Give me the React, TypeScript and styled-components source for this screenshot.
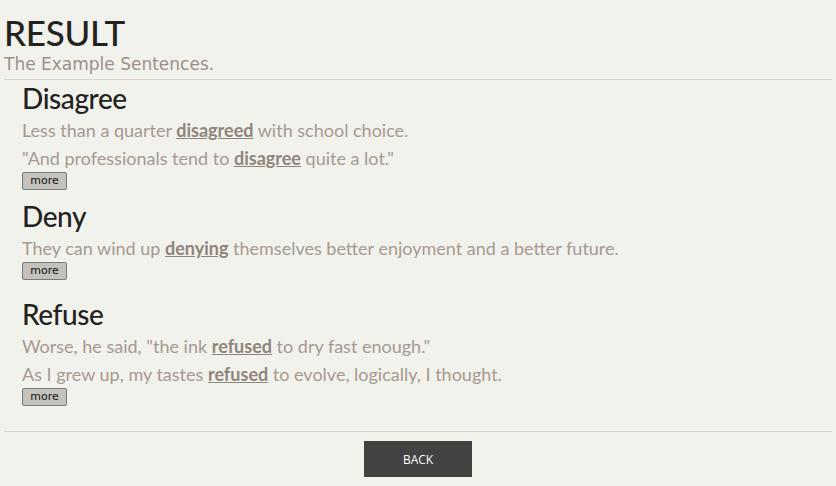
import styled, { createGlobalStyle } from 'styled-components';

const GlobalStyle = createGlobalStyle`
  html, body {
    margin: 0;
    padding: 0;
    background: #f2f2ec;
  }
`;

const Page = styled.div`
  padding: 0 4px;
  font-family: Lato, "Open Sans", sans-serif;
`;

const Header = styled.header`
  padding-top: 12px;
  border-bottom: 1px solid #d6d6cc;
  padding-bottom: 4px;
`;

const Title = styled.h1`
  margin: 0;
  font-size: 35px;
  line-height: 40px;
  font-weight: 500;
  color: #23221e;
  letter-spacing: -0.3px;
`;

const Subtitle = styled.div`
  padding-top: 2px;
  font-family: "DejaVu Sans", sans-serif;
  font-size: 17px;
  line-height: 21px;
  color: #9c8f86;
`;

const List = styled.main`
  padding: 0 0 17px 18px;
  border-bottom: 1px solid #d6d6cc;
`;

const Entry = styled.section<{ $gap?: number }>`
  margin-bottom: ${(p) => p.$gap ?? 8}px;
`;

const Word = styled.h2`
  margin: 0;
  font-size: 28px;
  line-height: 36px;
  font-weight: 500;
  color: #23221e;
  letter-spacing: -0.4px;
`;

const Sentence = styled.p`
  margin: 0;
  font-size: 18px;
  line-height: 28px;
  color: #a59a91;
`;

const Mark = styled.b`
  color: #8f857d;
  text-decoration: underline;
  font-weight: 700;
`;

const MoreButton = styled.button`
  display: block;
  width: 45px;
  height: 18px;
  padding: 0;
  font-family: "DejaVu Sans", sans-serif;
  font-size: 11px;
  line-height: 16px;
  color: #111;
  background: #c4c2bd;
  border: 1px solid #7a7a7a;
  border-radius: 2px;
`;

const Footer = styled.footer`
  display: flex;
  justify-content: center;
  padding-top: 9px;
`;

const BackButton = styled.button`
  width: 108px;
  height: 36px;
  background: #424242;
  color: #fff;
  border: none;
  font-family: "Open Sans", sans-serif;
  font-size: 12px;
`;

type Item = { word: string; sentences: [string, string, string][]; gap?: number };

const items: Item[] = [
  {
    word: 'Disagree',
    sentences: [
      ['Less than a quarter ', 'disagreed', ' with school choice.'],
      ['"And professionals tend to ', 'disagree', ' quite a lot."'],
    ],
  },
  {
    word: 'Deny',
    sentences: [['They can wind up ', 'denying', ' themselves better enjoyment and a better future.']],
    gap: 16,
  },
  {
    word: 'Refuse',
    sentences: [
      ['Worse, he said, "the ink ', 'refused', ' to dry fast enough."'],
      ['As I grew up, my tastes ', 'refused', ' to evolve, logically, I thought.'],
    ],
  },
];

export default function App() {
  return (
    <>
      <GlobalStyle />
      <Page>
        <Header>
          <Title>RESULT</Title>
          <Subtitle>The Example Sentences.</Subtitle>
        </Header>
        <List>
          {items.map((it) => (
            <Entry key={it.word} $gap={it.gap}>
              <Word>{it.word}</Word>
              {it.sentences.map(([a, b, c]) => (
                <Sentence key={a}>
                  {a}
                  <Mark>{b}</Mark>
                  {c}
                </Sentence>
              ))}
              <MoreButton>more</MoreButton>
            </Entry>
          ))}
        </List>
        <Footer>
          <BackButton>BACK</BackButton>
        </Footer>
      </Page>
    </>
  );
}
